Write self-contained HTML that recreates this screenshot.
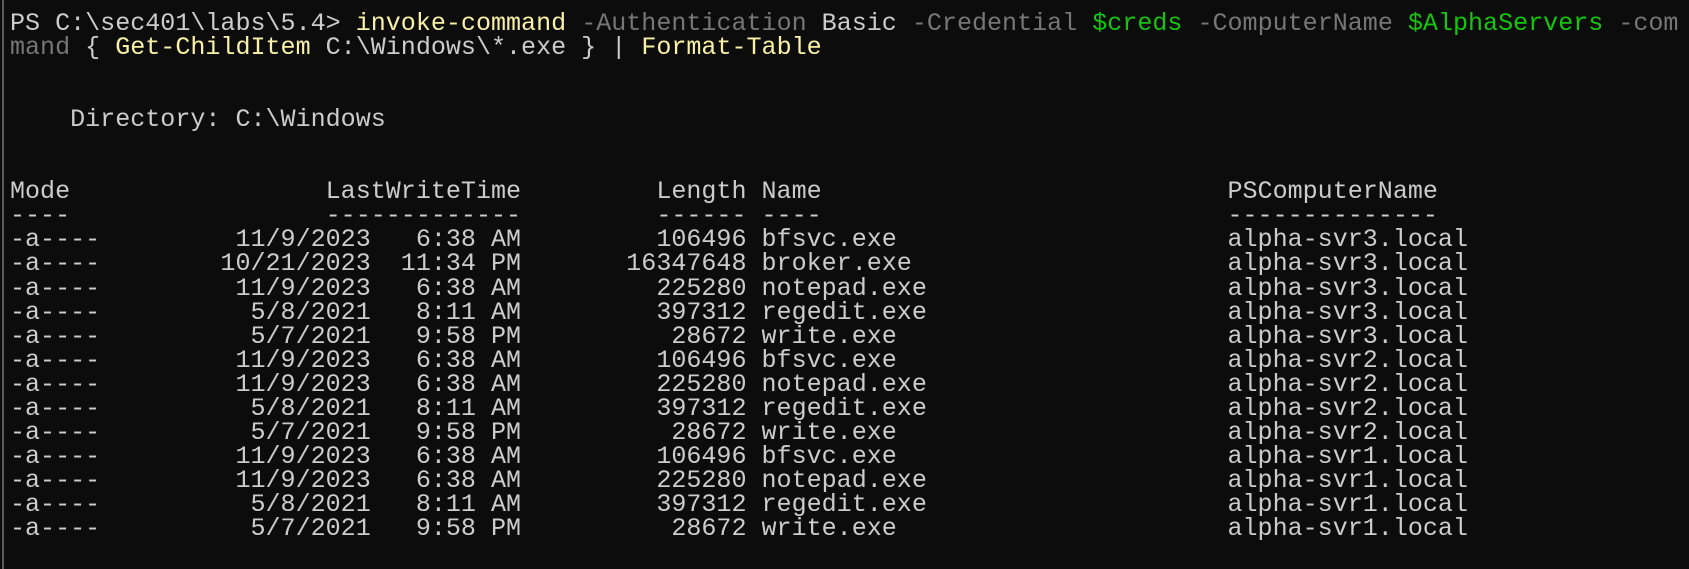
<!DOCTYPE html>
<html><head><meta charset="utf-8"><style>
html,body{margin:0;padding:0;background:#0c0c0c;width:1689px;height:569px;overflow:hidden}
.b{position:absolute;left:2px;top:0;width:2px;height:569px;background:#5a5a5a}
pre{position:absolute;left:10px;top:12px;margin:0;font-family:"Liberation Mono",monospace;font-size:25.05px;line-height:24.04px;color:#cccccc;white-space:pre}
.y{color:#f9f1a5}.g{color:#767676}.gr{color:#16c60c}
</style></head><body><div class="b"></div>
<pre>PS C:\sec401\labs\5.4&gt; <span class="y">invoke-command</span> <span class="g">-Authentication</span> Basic <span class="g">-Credential</span> <span class="gr">$creds</span> <span class="g">-ComputerName</span> <span class="gr">$AlphaServers</span> <span class="g">-com</span>
<span class="g">mand</span> { <span class="y">Get-ChildItem</span> C:\Windows\*.exe } | <span class="y">Format-Table</span>


    Directory: C:\Windows


Mode                 LastWriteTime         Length Name                           PSComputerName
----                 -------------         ------ ----                           --------------
-a----         11/9/2023   6:38 AM         106496 bfsvc.exe                      alpha-svr3.local
-a----        10/21/2023  11:34 PM       16347648 broker.exe                     alpha-svr3.local
-a----         11/9/2023   6:38 AM         225280 notepad.exe                    alpha-svr3.local
-a----          5/8/2021   8:11 AM         397312 regedit.exe                    alpha-svr3.local
-a----          5/7/2021   9:58 PM          28672 write.exe                      alpha-svr3.local
-a----         11/9/2023   6:38 AM         106496 bfsvc.exe                      alpha-svr2.local
-a----         11/9/2023   6:38 AM         225280 notepad.exe                    alpha-svr2.local
-a----          5/8/2021   8:11 AM         397312 regedit.exe                    alpha-svr2.local
-a----          5/7/2021   9:58 PM          28672 write.exe                      alpha-svr2.local
-a----         11/9/2023   6:38 AM         106496 bfsvc.exe                      alpha-svr1.local
-a----         11/9/2023   6:38 AM         225280 notepad.exe                    alpha-svr1.local
-a----          5/8/2021   8:11 AM         397312 regedit.exe                    alpha-svr1.local
-a----          5/7/2021   9:58 PM          28672 write.exe                      alpha-svr1.local</pre>
</body></html>
